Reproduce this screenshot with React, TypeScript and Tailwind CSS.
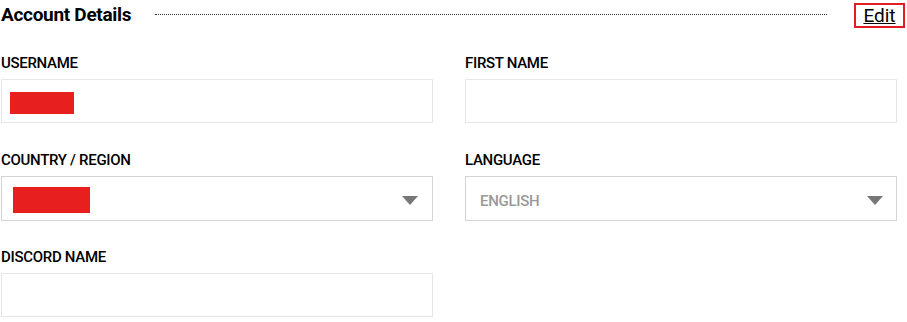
import React from "react";

const Arrow = () => (
  <svg width="16" height="9" viewBox="0 0 16 9" className="block">
    <path d="M0 0 L16 0 L8 9 Z" fill="#777777" />
  </svg>
);

const Label = ({ children }: { children: React.ReactNode }) => (
  <div className="h-[20px] leading-[20px] text-[15px] font-medium text-black uppercase tracking-[-0.3px] mb-[6px]">
    {children}
  </div>
);

export default function App() {
  return (
    <div className="w-[907px] h-[322px] bg-white pl-[1px] pr-[2px]" style={{ fontFamily: "Roboto, 'Liberation Sans', sans-serif" }}>
      <div className="flex items-center h-[28px]">
        <div className="text-[19px] font-bold text-black tracking-[-0.3px] leading-none">Account Details</div>
        <div className="ml-[24px] w-[672px] border-t border-dotted border-[#333] mt-[1px]" />
        <div className="ml-auto mt-[2px] h-[25px] w-[51px] border-2 border-[#e31b23] flex items-center justify-center">
          <span className="text-[19px] leading-none underline text-black">Edit</span>
        </div>
      </div>
      <div className="mt-[25px] grid grid-cols-2 gap-x-[32px] w-[896px]">
        <div className="mb-[27px]">
          <Label>Username</Label>
          <div className="h-[44px] border border-[#e6e6e6] flex items-center pl-[8px]">
            <div className="w-[64px] h-[22px] bg-[#e81f1f] mt-[4px]" />
          </div>
        </div>
        <div className="mb-[27px]">
          <Label>First Name</Label>
          <div className="h-[44px] border border-[#e6e6e6]" />
        </div>
        <div className="mb-[26px]">
          <Label>Country / Region</Label>
          <div className="h-[45px] border border-[#d4d4d4] flex items-center pl-[11px] pr-[14px]">
            <div className="w-[77px] h-[26px] bg-[#e81f1f] mt-[3px]" />
            <div className="ml-auto mt-[4px]"><Arrow /></div>
          </div>
        </div>
        <div className="mb-[26px]">
          <Label>Language</Label>
          <div className="h-[45px] border border-[#d4d4d4] flex items-center pl-[14px] pr-[13px]">
            <span className="text-[15px] font-medium text-[#999999] tracking-[-0.3px] mt-[6px]">ENGLISH</span>
            <div className="ml-auto mt-[4px]"><Arrow /></div>
          </div>
        </div>
        <div>
          <Label>Discord Name</Label>
          <div className="h-[44px] border border-[#e6e6e6]" />
        </div>
      </div>
    </div>
  );
}
